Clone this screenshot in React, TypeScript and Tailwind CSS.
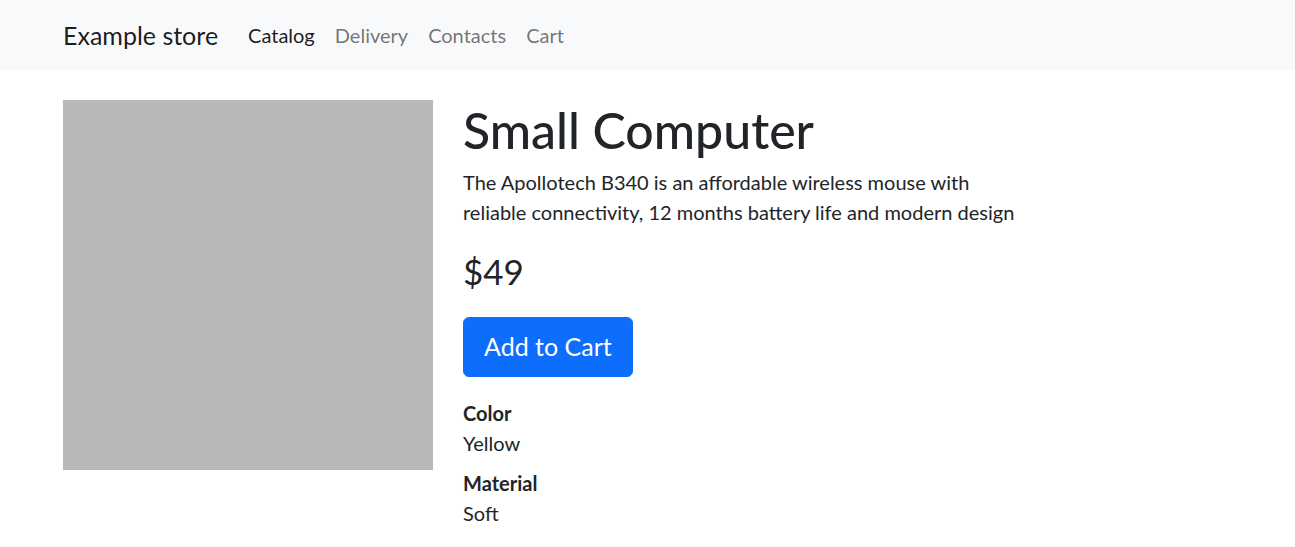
const navLinks: [string, boolean][] = [
    ["Catalog", true],
    ["Delivery", false],
    ["Contacts", false],
    ["Cart", false],
];

const specs: [string, string][] = [
    ["Color", "Yellow"],
    ["Material", "Soft"],
];

export default function App() {
    return (
        <div className="min-h-screen bg-white font-['Lato',sans-serif] text-[#212529]">
            <nav className="h-[70px] bg-[#f8f9fa]">
                <div className="flex h-full items-center px-[63px]">
                    <a className="mr-[20px] text-[25px] leading-[37px] text-black/90">
                        Example store
                    </a>
                    <ul className="flex">
                        {navLinks.map(([label, active]) => (
                            <li key={label}>
                                <a
                                    className={
                                        active
                                            ? "block px-[10px] text-[20px] leading-[30px] text-black/90"
                                            : "block px-[10px] text-[20px] leading-[30px] text-black/55"
                                    }
                                >
                                    {label}
                                </a>
                            </li>
                        ))}
                    </ul>
                </div>
            </nav>
            <main className="flex gap-[30px] px-[63px] pt-[30px]">
                <div className="h-[370px] w-[370px] shrink-0 bg-[#b8b8b8]" />
                <div className="w-[570px]">
                    <h1 className="mb-[7px] text-[50px] font-medium leading-[60px]">
                        Small Computer
                    </h1>
                    <p className="mb-[23px] text-[20px] leading-[30px]">
                        The Apollotech B340 is an affordable wireless mouse with
                        reliable connectivity, 12 months battery life and modern
                        design
                    </p>
                    <h3 className="mb-[25px] text-[35px] leading-[42px]">$49</h3>
                    <button className="mb-[21px] rounded-[6px] border border-[#0d6efd] bg-[#0d6efd] px-[20px] py-[10px] text-[25px] leading-[37.5px] text-white">
                        Add to Cart
                    </button>
                    <dl>
                        {specs.map(([name, value]) => (
                            <div key={name}>
                                <dt className="text-[20px] font-bold leading-[30px]">
                                    {name}
                                </dt>
                                <dd className="mb-[10px] text-[20px] leading-[30px]">
                                    {value}
                                </dd>
                            </div>
                        ))}
                    </dl>
                </div>
            </main>
        </div>
    );
}
